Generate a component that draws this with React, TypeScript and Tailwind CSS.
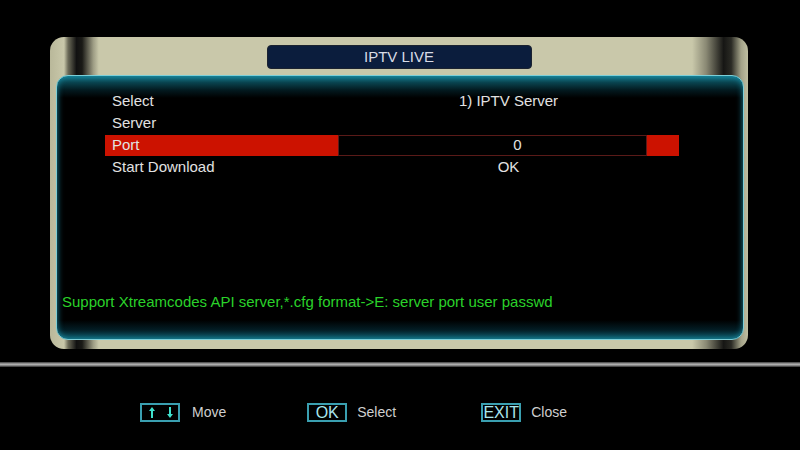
import React from 'react';

const rows = [
    { label: 'Select', value: '1) IPTV Server' },
    { label: 'Server', value: '' },
    { label: 'Port', value: '0', active: true },
    { label: 'Start Download', value: 'OK' },
];

function KeyBox({ children }: { children: React.ReactNode }) {
    return (
        <div className="w-[40px] h-[19px] border-2 border-[#3a9fb0] flex items-center justify-center text-[16px] leading-none text-[#a8e6ee]">
            {children}
        </div>
    );
}

export default function App() {
    return (
        <div className="w-[800px] h-[450px] bg-black overflow-hidden flex flex-col" style={{ fontFamily: '"Liberation Sans", Arial, sans-serif' }}>
            {/* bezel */}
            <div className="mt-[37px] ml-[50px] w-[698px] h-[312px] rounded-[14px] bg-[linear-gradient(to_right,#b9b89a_0%,#c9c8aa_2%,#6b6a58_2.6%,#111_3.8%,#1a1a16_4.6%,#9d9c84_6.2%,#c9c8aa_7%,#c9c8aa_92%,#8a8974_94%,#161614_96.5%,#2a2a24_97.6%,#a3a288_99%,#c0bfa2_100%)] flex flex-col">
                <div className="h-[38px] flex justify-center pt-[8px]">
                    <div className="w-[265px] h-[24px] bg-[#0b1d3d] border border-[#1b2230] rounded-[4px] flex items-center justify-center text-[15px] text-[#d8dbe6]">
                        IPTV LIVE
                    </div>
                </div>
                {/* inner panel */}
                <div className="ml-[6px] mr-[4px] h-[265px] rounded-[12px] border border-[#7ccfd8] bg-[linear-gradient(to_bottom,#137386_0px,#0a4652_6px,#031a20_14px,#000_22px,#000_244px,#031e26_254px,#0d5e6e_264px)] shadow-[inset_0_0_6px_#1a8ea6] flex flex-col">
                    <div className="pt-[14px] pl-[48px] flex flex-col">
                        {rows.map((r, i) => (
                            <div key={i} className="h-[22px] w-[574px] flex items-center text-[15px] text-[#e2e2e2]">
                                {r.active ? (
                                    <>
                                        <div className="w-[233px] h-[21px] bg-[#cc1200] flex items-center pl-[7px]">{r.label}</div>
                                        <div className="w-[309px] h-[21px] border border-[#5a1a18] flex items-center justify-center pl-[50px]">{r.value}</div>
                                        <div className="w-[32px] h-[21px] bg-[#cc1200]" />
                                    </>
                                ) : (
                                    <>
                                        <div className="w-[233px] pl-[7px]">{r.label}</div>
                                        <div className="w-[341px] text-center">{r.value}</div>
                                    </>
                                )}
                            </div>
                        ))}
                    </div>
                    <div className="mt-auto mb-[26px] pl-[5px] text-[15px] text-[#2ad22a]">
                        Support Xtreamcodes API server,*.cfg format-&gt;E: server port user passwd
                    </div>
                </div>
            </div>

            {/* divider */}
            <div className="mt-[13px] h-[5px] bg-[linear-gradient(to_bottom,#3a3a3a,#b8b8b8_45%,#7a7a7a_75%,#2a2a2a)]" />

            {/* footer */}
            <div className="mt-[35px] flex items-center text-[14px] text-[#cfcfcf]">
                <div className="ml-[140px]">
                    <KeyBox>
                        <svg width="30" height="13" viewBox="0 0 30 13">
                            <path d="M7 12V3" stroke="#3fe0cc" strokeWidth="2" />
                            <path d="M4 5L7 1L10 5Z" fill="#3fe0cc" />
                            <path d="M25 1V10" stroke="#3fe0cc" strokeWidth="2" />
                            <path d="M22 8L25 12L28 8Z" fill="#3fe0cc" />
                        </svg>
                    </KeyBox>
                </div>
                <span className="ml-[12px]">Move</span>
                <div className="ml-[81px]">
                    <KeyBox>OK</KeyBox>
                </div>
                <span className="ml-[10px]">Select</span>
                <div className="ml-[85px]">
                    <KeyBox>EXIT</KeyBox>
                </div>
                <span className="ml-[10px]">Close</span>
            </div>
        </div>
    );
}
